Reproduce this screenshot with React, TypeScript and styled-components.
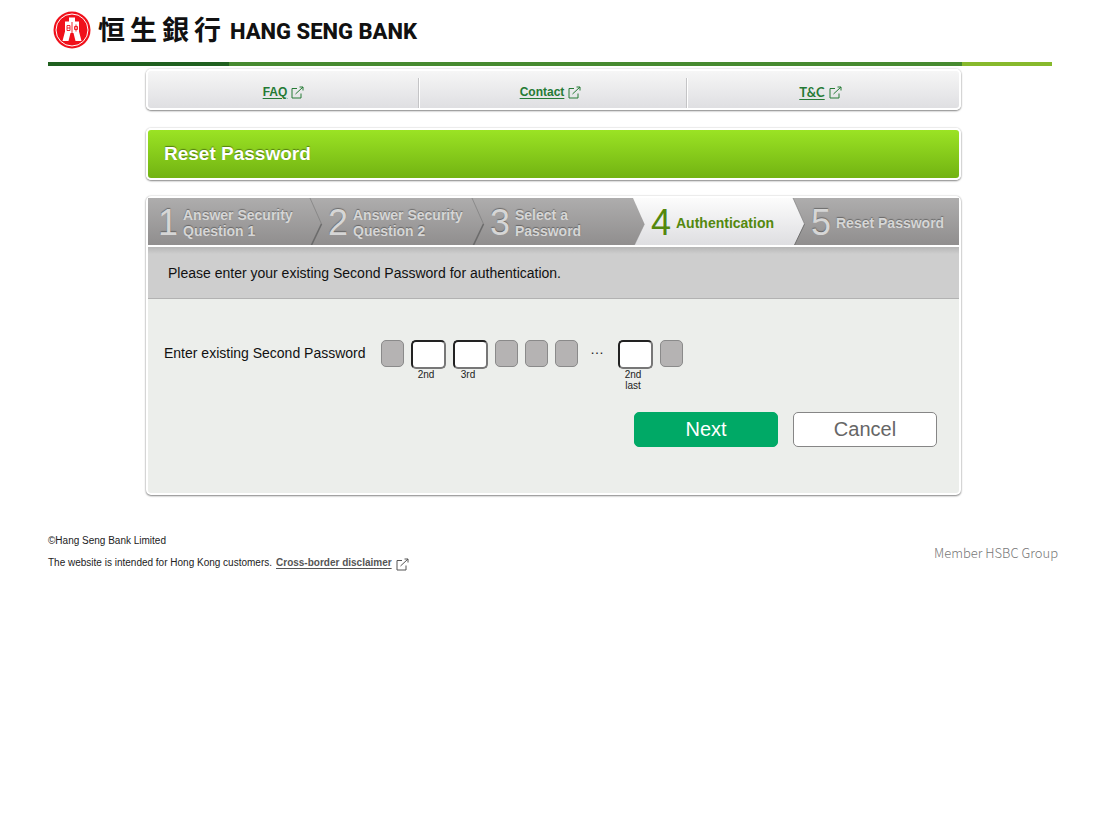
import React from "react";
import styled, { createGlobalStyle, css } from "styled-components";

const GlobalStyle = createGlobalStyle`
  *, *::before, *::after { box-sizing: border-box; }
  body {
    margin: 0;
    background: #fff;
    color: #222;
    font-family: "Liberation Sans", Arial, Helvetica, sans-serif;
    font-size: 14px;
  }
`;

const Page = styled.div`
  padding: 0 48px;
`;

const Header = styled.header`
  display: flex;
  align-items: center;
  height: 62px;
  padding: 0 0 2px 5px;
`;

const Emblem = styled.svg`
  width: 38px;
  height: 38px;
  flex: none;
`;

const ChineseName = styled.span`
  display: flex;
  gap: 5px;
  margin-left: 7px;
  padding-bottom: 2px;
  font-family: "Noto Sans CJK TC", sans-serif;
  font-size: 27px;
  font-weight: 700;
  line-height: 40px;
  color: #111;
`;

const EnglishName = styled.span`
  margin-left: 9px;
  padding-top: 3px;
  font-family: Roboto, sans-serif;
  font-size: 22px;
  font-weight: 800;
  line-height: 24px;
  color: #111;
  white-space: nowrap;
`;

const Stripe = styled.div`
  height: 4px;
  background: linear-gradient(
    to right,
    #20601f 0 18%,
    #468a2f 18% 91%,
    #87b92c 91% 100%
  );
`;

const Content = styled.main`
  padding: 3px 91px 0 98px;
`;

const panel = css`
  border: 2px solid #fff;
  border-radius: 5px;
  box-shadow: 0 1px 2px rgba(0, 0, 0, 0.45), 0 0 2px rgba(0, 0, 0, 0.2);
`;

const LinkBar = styled.nav`
  ${panel}
  display: grid;
  grid-template-columns: 271fr 268fr 272fr;
  height: 41px;
  padding-top: 7px;
  background: linear-gradient(#f6f6f6, #dfdfe2);
`;

const LinkCell = styled.div`
  display: flex;
  align-items: center;
  justify-content: center;
  padding: 0 6px 3px 0;
  & + & {
    border-left: 1px solid #fff;
    box-shadow: -1px 0 0 #c4c4c6;
  }
  &:first-child {
    padding-right: 0;
  }
`;

const NavLink = styled.a<{ $lato?: boolean }>`
  display: inline-flex;
  align-items: center;
  gap: 4px;
  color: #257a35;
  font-family: ${(p) => (p.$lato ? "Lato, sans-serif" : "inherit")};
  font-size: ${(p) => (p.$lato ? "13px" : "12px")};
  font-weight: 700;
  line-height: 16px;
  text-underline-offset: 2px;
`;

const ExternalGlyph = styled.svg`
  width: 13px;
  height: 13px;
  margin-top: 2px;
  fill: none;
  stroke: currentColor;
`;

const TitleBar = styled.div`
  ${panel}
  display: flex;
  align-items: center;
  height: 52px;
  margin-top: 18px;
  padding: 0 16px;
  background: linear-gradient(#9be324, #72b312);
`;

const Title = styled.h1`
  margin: 0;
  color: #fff;
  font-size: 19px;
  line-height: 24px;
  text-shadow: 0 -1px 1px rgba(0, 0, 0, 0.4);
`;

const Card = styled.section`
  ${panel}
  margin-top: 16px;
  background: #eceeeb;
`;

const Steps = styled.ol`
  display: grid;
  grid-template-columns: 161fr 162fr 161fr 160fr 167fr;
  height: 49px;
  margin: 0;
  padding: 0;
  list-style: none;
  border-bottom: 2px solid #fff;
`;

const Step = styled.li<{ $active?: boolean }>`
  position: relative;
  display: flex;
  align-items: center;
  gap: 4px;
  padding-left: 19px;
  color: ${(p) => (p.$active ? "#54880e" : "#d6d6d6")};
  background: ${(p) =>
    p.$active
      ? "linear-gradient(#fcfcfc, #dedee1)"
      : "linear-gradient(#aeadad, #908e8e)"};
  text-shadow: ${(p) => (p.$active ? "none" : "0 -1px 1px rgba(0, 0, 0, 0.35)")};
  &:first-child {
    padding-left: 10px;
  }
`;

const StepNumber = styled.span`
  flex: none;
  width: 21px;
  padding-top: 3px;
  font-size: 36px;
  line-height: 44px;
`;

const StepName = styled.span`
  padding-top: 3px;
  font-size: 14px;
  font-weight: 700;
  line-height: 16px;
`;

const Arrow = styled.svg`
  position: absolute;
  top: 0;
  left: 0;
  width: 14px;
  height: 47px;
`;

const Notice = styled.p`
  margin: 0;
  padding: 16px 20px 14px;
  font-size: 14px;
  line-height: 21px;
  color: #111;
  background: linear-gradient(#b6b6b6, #cecece 7px);
  border-bottom: 1px solid #b2b2b2;
`;

const Form = styled.form`
  padding: 41px 22px 46px 16px;
`;

const PasswordRow = styled.fieldset`
  display: flex;
  align-items: flex-start;
  min-height: 72px;
  margin: 0;
  padding: 0;
  border: 0;
`;

const RowLabel = styled.span`
  flex: none;
  width: 217px;
  line-height: 27px;
  color: #111;
`;

const Slots = styled.div`
  display: flex;
  gap: 7px;
`;

const LockedSlot = styled.span`
  width: 23px;
  height: 27px;
  border: 1px solid #8a8a8a;
  border-radius: 5px;
  background: #b5b3b3;
`;

const OpenSlot = styled.label`
  display: flex;
  flex-direction: column;
  width: 35px;
  font-size: 10px;
  line-height: 11px;
  text-align: center;
`;

const SlotInput = styled.input`
  width: 35px;
  height: 29px;
  padding: 0 4px;
  border: 2px solid;
  border-color: #222 #777 #777 #222;
  border-radius: 5px;
  background: #fff;
  font: inherit;
  font-size: 14px;
  text-align: center;
`;

const SlotCaption = styled.span`
  width: 30px;
`;

const Ellipsis = styled.span`
  width: 26px;
  padding-left: 5px;
  line-height: 18px;
`;

const Actions = styled.div`
  display: flex;
  justify-content: flex-end;
  gap: 15px;
`;

const Button = styled.button<{ $primary?: boolean }>`
  width: 144px;
  height: 35px;
  padding: 0 0 2px;
  border: 1px solid ${(p) => (p.$primary ? "#00a966" : "#868686")};
  border-radius: 5px;
  color: ${(p) => (p.$primary ? "#fff" : "#666")};
  background: ${(p) => (p.$primary ? "#00a966" : "#fff")};
  font-family: inherit;
  font-size: 20px;
  line-height: 24px;
`;

const Footer = styled.footer`
  display: flex;
  justify-content: space-between;
  align-items: center;
  margin: 35px -6px 0 0;
  font-size: 10px;
  line-height: 22px;
`;

const FooterLine = styled.p`
  display: flex;
  align-items: center;
  gap: 4px;
  margin: 0;
`;

const DisclaimerLink = styled(NavLink)`
  color: #555;
  font-size: 10px;
`;

const Member = styled.p`
  margin: 0;
  padding-top: 2px;
  color: #777;
  font-family: "Noto Sans CJK SC", sans-serif;
  font-size: 13px;
  font-weight: 300;
`;

function ExternalIcon() {
  return (
    <ExternalGlyph viewBox="0 0 13 13" aria-hidden="true">
      <path d="M6 2.500H1v9.500h9V7.500" />
      <path d="M4.500 8 12 1M8.500 1H12v3.500" />
    </ExternalGlyph>
  );
}

function StepArrow({ kind }: { kind: "divider" | "grey" | "light" }) {
  const id = `arrow-${kind}`;
  const [top, bottom] = kind === "light" ? ["#fcfcfc", "#dedee1"] : ["#aeadad", "#908e8e"];
  return (
    <Arrow viewBox="0 0 14 47" aria-hidden="true">
      <defs>
        <linearGradient id={id} gradientUnits="userSpaceOnUse" x1="0" y1="0" x2="0" y2="47">
          <stop offset="0" stopColor={top} />
          <stop offset="1" stopColor={bottom} />
        </linearGradient>
      </defs>
      <path d="M0 0H1L12.500 26 2.500 47H0z" fill={`url(#${id})`} />
      {kind !== "grey" && (
        <path d="M1 0 12.500 26" fill="none" stroke="#777" strokeOpacity=".6" />
      )}
      <path
        d="M12.500 26 2.500 47"
        fill="none"
        stroke={kind === "grey" ? "#888" : "#666"}
        strokeWidth={kind === "divider" ? 1.6 : 1}
        strokeOpacity={kind === "grey" ? 0.4 : 0.9}
      />
    </Arrow>
  );
}

function Digit({ caption, name }: { caption: React.ReactNode; name: string }) {
  return (
    <OpenSlot>
      <SlotInput type="password" maxLength={1} name={name} />
      <SlotCaption>{caption}</SlotCaption>
    </OpenSlot>
  );
}

export default function App() {
  return (
    <>
      <GlobalStyle />
      <Page>
        <Header>
          <Emblem viewBox="0 0 38 38" aria-hidden="true">
            <circle cx="19" cy="19" r="18.500" fill="#f0101a" />
            <circle cx="19" cy="19" r="16" fill="none" stroke="#fff" strokeWidth="1" />
            <path
              d="M16 6.500h6v4h4v10l2.500 9.500h-6L20.500 22h-3L15.500 30h-6L12 20.500v-10h4z"
              fill="#fff"
            />
            <path
              d="M14 14.500h3v5h-3zM14 17h3M19 11v12M21.500 15.500h3v3h-3zM23 13.500v7"
              fill="none"
              stroke="#f0101a"
              strokeWidth=".9"
            />
          </Emblem>
          <ChineseName lang="zh-Hant">
            <span>恒</span>
            <span>生</span>
            <span>銀</span>
            <span>行</span>
          </ChineseName>
          <EnglishName>HANG SENG BANK</EnglishName>
        </Header>
        <Stripe />

        <Content>
          <LinkBar>
            <LinkCell>
              <NavLink href="#faq">
                FAQ
                <ExternalIcon />
              </NavLink>
            </LinkCell>
            <LinkCell>
              <NavLink href="#contact">
                Contact
                <ExternalIcon />
              </NavLink>
            </LinkCell>
            <LinkCell>
              <NavLink href="#terms" $lato>
                T&amp;C
                <ExternalIcon />
              </NavLink>
            </LinkCell>
          </LinkBar>

          <TitleBar>
            <Title>Reset Password</Title>
          </TitleBar>

          <Card>
            <Steps>
              <Step>
                <StepNumber>1</StepNumber>
                <StepName>Answer Security<br />Question 1</StepName>
              </Step>
              <Step>
                <StepArrow kind="divider" />
                <StepNumber>2</StepNumber>
                <StepName>Answer Security<br />Question 2</StepName>
              </Step>
              <Step>
                <StepArrow kind="divider" />
                <StepNumber>3</StepNumber>
                <StepName>Select a<br />Password</StepName>
              </Step>
              <Step $active aria-current="step">
                <StepArrow kind="grey" />
                <StepNumber>4</StepNumber>
                <StepName>Authentication</StepName>
              </Step>
              <Step>
                <StepArrow kind="light" />
                <StepNumber>5</StepNumber>
                <StepName>Reset Password</StepName>
              </Step>
            </Steps>
            <Notice>Please enter your existing Second Password for authentication.</Notice>
            <Form onSubmit={(e) => e.preventDefault()}>
              <PasswordRow aria-labelledby="second-password">
                <RowLabel id="second-password">Enter existing Second Password</RowLabel>
                <Slots>
                  <LockedSlot />
                  <Digit name="digit-2" caption="2nd" />
                  <Digit name="digit-3" caption="3rd" />
                  <LockedSlot />
                  <LockedSlot />
                  <LockedSlot />
                  <Ellipsis>…</Ellipsis>
                  <Digit name="digit-second-last" caption={<>2nd<br />last</>} />
                  <LockedSlot />
                </Slots>
              </PasswordRow>
              <Actions>
                <Button type="submit" $primary>Next</Button>
                <Button type="button">Cancel</Button>
              </Actions>
            </Form>
          </Card>
        </Content>

        <Footer>
          <div>
            <FooterLine>©Hang Seng Bank Limited</FooterLine>
            <FooterLine>
              The website is intended for Hong Kong customers.
              <DisclaimerLink href="#disclaimer">
                Cross-border disclaimer
                <ExternalIcon />
              </DisclaimerLink>
            </FooterLine>
          </div>
          <Member>Member HSBC Group</Member>
        </Footer>
      </Page>
    </>
  );
}
